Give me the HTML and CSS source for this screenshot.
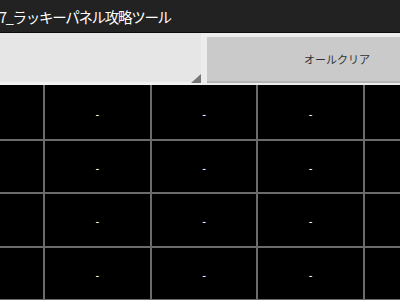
FILE: index.html
```html
<!DOCTYPE html>
<html lang="ja">
<head>
    <meta charset="UTF-8">
    <meta name="viewport" content="width=device-width, initial-scale=1.0">
    <title>ラッキーパネル攻略ツール</title>
    <link rel="stylesheet" href="styles.css">
</head>
<body>
    <div class="title-bar">
        <span class="title">7_ラッキーパネル攻略ツール</span>
    </div>
    <div class="toolbar">
        <div class="spinner"><span class="spinner-arrow"></span></div>
        <button class="clear-button">オールクリア</button>
    </div>
    <div class="panel-grid">
        <div class="cell edge"></div><div class="cell">-</div><div class="cell">-</div><div class="cell">-</div><div class="cell edge"></div>
        <div class="cell edge"></div><div class="cell">-</div><div class="cell">-</div><div class="cell">-</div><div class="cell edge"></div>
        <div class="cell edge"></div><div class="cell">-</div><div class="cell">-</div><div class="cell">-</div><div class="cell edge"></div>
        <div class="cell edge"></div><div class="cell">-</div><div class="cell">-</div><div class="cell">-</div><div class="cell edge"></div>
    </div>
</body>
</html>
```

FILE: styles.css
```css
/* 画面全体 */
body {
    margin: 0;
    height: 300px;
    overflow: hidden;
    background-color: #000000;
    font-family: "Noto Sans CJK JP", "DejaVu Sans", sans-serif;
}
.title-bar {
    height: 32px;
    background-color: #222222;
    border-bottom: 1px solid #0c0c0c;
    display: flex;
    align-items: center;
    overflow: hidden;
}
.title {
    color: #ffffff;
    font-size: 14.5px;
    letter-spacing: -1.3px;
    white-space: nowrap;
    margin-left: -1px;
}
.toolbar {
    height: 52px;
    display: flex;
    background-color: #ececec;
    overflow: hidden;
}
.spinner {
    width: 201px;
    flex-shrink: 0;
    background-color: #e6e6e6;
    border-bottom: 3px solid #f2f2f2;
    box-sizing: border-box;
    display: flex;
    justify-content: flex-end;
    align-items: flex-end;
}
.spinner-arrow {
    width: 0;
    height: 0;
    border-left: 10px solid transparent;
    border-bottom: 9px solid #767676;
    margin-bottom: -1px;
}
.clear-button {
    width: 260px;
    flex-shrink: 0;
    margin: 4px 0 2px 6px;
    background-color: #cacaca;
    border: none;
    border-bottom: 2px solid #b4b4b4;
    font-family: inherit;
    font-size: 11px;
    color: #333333;
    padding: 0;
}
.panel-grid {
    display: grid;
    grid-template-columns: 43px repeat(3, 104.67px) 1fr;
    grid-template-rows: 54px repeat(3, 51.33px);
    gap: 2px;
    padding-bottom: 2px;
    background-color: #6b6b6b;
}
.cell {
    background-color: #000000;
    color: #f0f0f0;
    font-size: 10px;
    font-weight: bold;
    display: flex;
    align-items: center;
    justify-content: center;
    padding-top: 2px;
}
```
